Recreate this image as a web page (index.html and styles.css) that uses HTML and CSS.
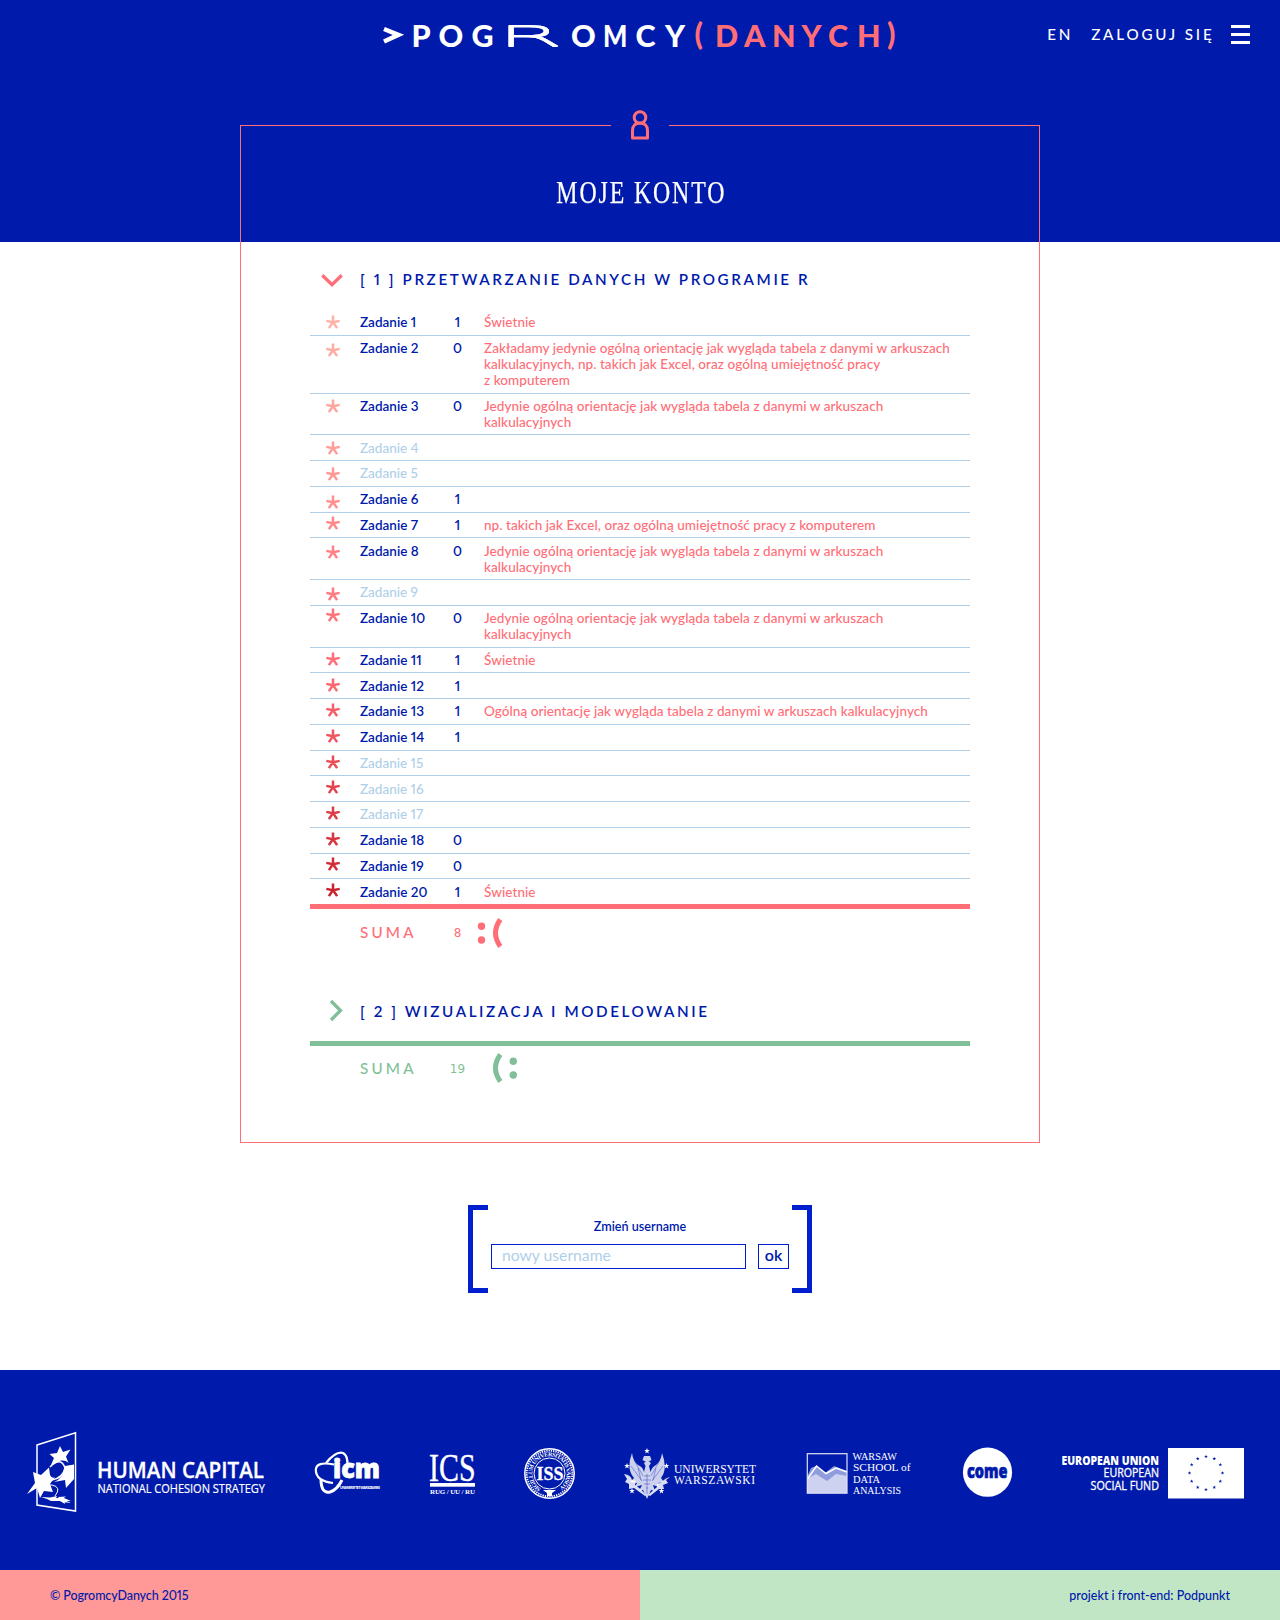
FILE: index.html
```html
<!DOCTYPE html>
<html lang="pl">
<head>
<meta charset="utf-8">
<title>PogromcyDanych – Moje konto</title>
<link rel="stylesheet" href="styles.css">
</head>
<body>
<svg class="defs" width="0" height="0" aria-hidden="true">
  <symbol id="star" viewBox="0 0 14 14"><path d="M7 7.6V.4M7 7.3L.3 5.9M7 7.3L13.7 5.9M7 7L2.9 13.1M7 7L11.1 13.1" fill="none" stroke="currentColor" stroke-width="2.5"/></symbol>
  <symbol id="fivestar" viewBox="-10 -10 20 20"><path d="M0-10L2.4-3.1H9.5L3.8 1.2L5.9 8.1L0 4L-5.9 8.1L-3.8 1.2L-9.5-3.1H-2.4Z" fill="currentColor"/></symbol>
</svg>

<header class="top">
  <div class="top-bar">
    <svg class="brand" width="520" height="32" viewBox="0 0 520 32">
      <path d="M4 9L18.500 14.900L4 21.500" class="prompt"/>
      <text class="brand-text" y="27" x="31.5 58.5 91.5">POG</text>
      <g transform="translate(117 26) scale(3.3 1)"><text class="brand-wide">R</text></g>
      <text class="brand-text" y="27" x="191">O</text>
      <g transform="translate(223 27) scale(.84 1)"><text class="brand-text">M</text></g>
      <text class="brand-text" y="27" x="255.5 285">CY</text>
      <text class="brand-text accent" y="24.5 27 27 27 27 27 27 24.5" x="314.5 335 364 392 421.5 448 477 507">(DANYCH)</text>
    </svg>
    <nav class="nav">
      <a class="lang">EN</a>
      <a class="login">ZALOGUJ SIĘ</a>
      <span class="burger"><i></i><i></i><i></i></span>
    </nav>
  </div>
</header>

<main class="frame">
  <div class="frame-top">
    <span class="rule"></span>
    <svg width="20" height="32" viewBox="0 0 20 32" class="person"><circle cx="10" cy="8.5" r="5.8"/><path d="M2.5 28.9V21.5C2.5 16.6 5.6 14 10 14S17.500 16.600 17.500 21.500V28.900Z"/></svg>
    <span class="rule"></span>
  </div>
  <h1><span>MOJE KONTO</span></h1>

  <section class="course">
    <h2><svg class="chev" width="24" height="24" viewBox="0 0 24 24"><path d="M2.300 8.300L12 17.800L21.700 8.300"/></svg>[ 1 ] PRZETWARZANIE DANYCH W PROGRAMIE R</h2>
    <div class="tasks">
      <div class="row"><svg class="star" style="--y:5px;color:#ffb3a8"><use href="#star"/></svg><b>Zadanie 1</b><i>1</i><p>Świetnie</p></div>
      <div class="row"><svg class="star" style="--y:7.300px;color:#ffada3"><use href="#star"/></svg><b>Zadanie 2</b><i>0</i><p>Zakładamy jedynie ogólną orientację jak wygląda tabela z danymi w arkuszach<br>kalkulacyjnych, np. takich jak Excel, oraz ogólną umiejętność pracy<br>z komputerem</p></div>
      <div class="row"><svg class="star" style="--y:5.800px;color:#ffa59e"><use href="#star"/></svg><b>Zadanie 3</b><i>0</i><p>Jedynie ogólną orientację jak wygląda tabela z danymi w arkuszach<br>kalkulacyjnych</p></div>
      <div class="row off"><svg class="star" style="--y:6.100px;color:#ff9e98"><use href="#star"/></svg><b>Zadanie 4</b></div>
      <div class="row off"><svg class="star" style="--y:5.900px;color:#ff9793"><use href="#star"/></svg><b>Zadanie 5</b></div>
      <div class="row"><svg class="star" style="--y:8.200px;color:#ff908e"><use href="#star"/></svg><b>Zadanie 6</b><i>1</i></div>
      <div class="row"><svg class="star" style="--y:3.900px;color:#ff8989"><use href="#star"/></svg><b>Zadanie 7</b><i>1</i><p>np. takich jak Excel, oraz ogólną umiejętność pracy z komputerem</p></div>
      <div class="row"><svg class="star" style="--y:7.200px;color:#ff8285"><use href="#star"/></svg><b>Zadanie 8</b><i>0</i><p>Jedynie ogólną orientację jak wygląda tabela z danymi w arkuszach<br>kalkulacyjnych</p></div>
      <div class="row off"><svg class="star" style="--y:7.300px;color:#ff7b80"><use href="#star"/></svg><b>Zadanie 9</b></div>
      <div class="row"><svg class="star" style="--y:2.200px;color:#ff747b"><use href="#star"/></svg><b>Zadanie 10</b><i>0</i><p>Jedynie ogólną orientację jak wygląda tabela z danymi w arkuszach<br>kalkulacyjnych</p></div>
      <div class="row"><svg class="star" style="--y:4.900px;color:#ff6e77"><use href="#star"/></svg><b>Zadanie 11</b><i>1</i><p>Świetnie</p></div>
      <div class="row"><svg class="star" style="--y:4.900px;color:#fb666f"><use href="#star"/></svg><b>Zadanie 12</b><i>1</i></div>
      <div class="row"><svg class="star" style="--y:4.500px;color:#f55e67"><use href="#star"/></svg><b>Zadanie 13</b><i>1</i><p>Ogólną orientację jak wygląda tabela z danymi w arkuszach kalkulacyjnych</p></div>
      <div class="row"><svg class="star" style="--y:4.700px;color:#ef555f"><use href="#star"/></svg><b>Zadanie 14</b><i>1</i></div>
      <div class="row off"><svg class="star" style="--y:4.300px;color:#e94d56"><use href="#star"/></svg><b>Zadanie 15</b></div>
      <div class="row off"><svg class="star" style="--y:4.200px;color:#e3454e"><use href="#star"/></svg><b>Zadanie 16</b></div>
      <div class="row off"><svg class="star" style="--y:4.200px;color:#dc3c46"><use href="#star"/></svg><b>Zadanie 17</b></div>
      <div class="row"><svg class="star" style="--y:4px;color:#d6343e"><use href="#star"/></svg><b>Zadanie 18</b><i>0</i></div>
      <div class="row"><svg class="star" style="--y:3.800px;color:#d02c36"><use href="#star"/></svg><b>Zadanie 19</b><i>0</i></div>
      <div class="row"><svg class="star" style="--y:3.600px;color:#c9242e"><use href="#star"/></svg><b>Zadanie 20</b><i>1</i><p>Świetnie</p></div>
    </div>
    <div class="sum red"><span class="sum-label">SUMA</span><span class="sum-num">8</span><svg class="face" width="40" height="32" viewBox="0 0 40 32"><circle cx="4.500" cy="9.300" r="3.700"/><circle cx="4.500" cy="23" r="3.700"/><path d="M23.300 2.500Q13.700 16 23.300 29.500"/></svg></div>
  </section>

  <section class="course green">
    <h2><svg class="chev" width="24" height="24" viewBox="0 0 24 24"><path d="M11 2L20.500 11.500L11 21"/></svg>[ 2 ] WIZUALIZACJA I MODELOWANIE</h2>
    <div class="sum"><span class="sum-label">SUMA</span><span class="sum-num">19</span><svg class="face" width="40" height="32" viewBox="0 0 40 32"><circle cx="36.300" cy="9.300" r="3.700"/><circle cx="36.300" cy="23" r="3.700"/><path d="M23.300 2.500Q13.700 16 23.300 29.500"/></svg></div>
  </section>
</main>

<form class="rename">
  <span class="bracket left"></span>
  <div class="fields">
    <label for="username">Zmień username</label>
    <div class="line">
      <input id="username" type="text" placeholder="nowy username">
      <button type="button">ok</button>
    </div>
  </div>
  <span class="bracket right"></span>
</form>

<footer>
  <div class="partners">
    <svg width="240" height="80" viewBox="0 0 240 80" fill="#fff">
      <path d="M10 13L48.500.700V79L10 73Z" fill="none" stroke="#fff" stroke-width="1.500"/>
      <path d="M33 14L36 20L43.500 17.500L39 24.500L41.500 31C38 28 34 28 31.500 30L24 33L27 26L22.500 22L30 21Z"/>
      <path d="M6 40L14 43L22 35.500L23 43Q25 47 28 45L23 52L26 60L17 59L13 66L10 56L0 62L8 51Z"/>
      <path d="M38 34L47 32.500V47L39 56L38 48L27 50Q37 46 38 34Z"/>
      <path d="M23 35Q34 24 38 36Q36 46 25 48" fill="none" stroke="#fff" stroke-width="1.500"/>
      <path d="M14 63Q16 52 25 53Q35 55 28 64" fill="none" stroke="#fff"/>
      <path d="M14 65L23 65.500L30 64L29 66L37 66L44 69L37 69L38 72L33 69L24 69L20 67ZM31 65L39 64.500L35 67L44 71L35 70Z"/>
      <text class="humanist" x="70" y="46" font-size="22" font-weight="600" stroke="#fff" stroke-width=".3" textLength="167" lengthAdjust="spacingAndGlyphs">HUMAN CAPITAL</text>
      <text class="humanist" x="70.500" y="60.800" font-size="12.300" stroke="#fff" stroke-width=".2" textLength="167.500" lengthAdjust="spacingAndGlyphs">NATIONAL COHESION STRATEGY</text>
    </svg>
    <svg width="68" height="80" viewBox="0 0 68 80">
      <g fill="none" stroke="#fff"><path d="M12 31Q22 19 29 21Q35 24 33 38" stroke-width="2.200"/><path d="M20 32.500Q2 29 1.800 38Q2 49 19 51" stroke-width="2.200"/><path d="M7 47Q7 62 16 60Q23 58 28 48" stroke-width="3"/></g>
      <text class="humanist" x="19" y="46" font-size="26" font-weight="800" fill="#fff" stroke="#fff" stroke-width=".8" textLength="47" lengthAdjust="spacingAndGlyphs">icm</text>
      <text class="humanist" x="26" y="57" font-size="3.700" font-weight="700" fill="#fff" textLength="40">UNIWERSYTET WARSZAWSKI</text>
    </svg>
    <svg width="47" height="80" viewBox="0 0 47 80" fill="#fff">
      <text class="serif" x="0" y="48.500" font-size="41" stroke="#fff" stroke-width=".4" textLength="46.500" lengthAdjust="spacingAndGlyphs">ICS</text>
      <rect x="1" y="51" width="45" height="3.700"/>
      <text class="serif" x="1" y="62" font-size="7" font-weight="700" textLength="45">RUG / UU / RU</text>
    </svg>
    <svg width="53" height="80" viewBox="0 0 53 80">
      <circle cx="26.500" cy="41.500" r="24.700" fill="none" stroke="#fff" stroke-width="1.500"/>
      <circle cx="26.500" cy="41.500" r="22.800" fill="none" stroke="#fff" stroke-width="1.800" stroke-dasharray="1.300 1"/>
      <circle cx="26.500" cy="41.500" r="15.500" fill="none" stroke="#fff" stroke-width="1"/>
      <path id="seal" d="M18 56.400A17.200 17.200 0 1 1 35 56.400" fill="none"/>
      <text class="serif" font-size="6" font-weight="700" fill="#fff"><textPath href="#seal" textLength="88">SIGILLUM UNIVERSITATIS VARSOV</textPath></text>
      <path d="M20 58H33L29 61V64H24V61Z" fill="#fff"/>
      <text class="serif" x="13.500" y="47.800" font-size="18.500" font-weight="700" fill="#fff" stroke="#fff" stroke-width=".3" textLength="27" lengthAdjust="spacingAndGlyphs">ISS</text>
    </svg>
    <svg width="135" height="80" viewBox="0 0 135 80" fill="#fff">
      <g opacity=".8">
        <path d="M9 21Q3 37 11 46L7 50L14 51L12 55L19 53L16 59L20 58L24 67L28 58L32 59L30 53L36 55L35 51L41 50L38 46Q45 37 39 21Q38 29 33 33Q29 35 27.500 40L26 34L28 31L24 28L21 31L22.500 34L21 40Q20 35 15 33Q10 29 9 21Z"/>
        <path d="M21 24H27L28.500 28Q24 31 19.500 28Z"/>
      </g>
      <g fill="none" stroke="#001aab" stroke-width=".6" opacity=".6"><path d="M11 28L20 44M8 34L19 49M37 28L28 44M40 34L29 49M15 36L18 48M33 36L30 48M21 44H27M20 48H28M21 52H27M23 56H25M24 42V62"/></g>
      <path d="M1 42Q8 43 9 48L13 49L12 53Q17 56 23 63L22 64L11 56L6 57L6 52L2 50L4 47ZM47 45Q42 46 39 50L34 52L34 55L25 63L27 64L36 57L41 57L40 53L45 51L43 48Z" opacity=".85"/>
      <g color="#fff"><use href="#fivestar" x="21" y="16" width="6" height="6"/><use href="#fivestar" x="1" y="31" width="6" height="6"/><use href="#fivestar" x="40.500" y="31" width="6" height="6"/><use href="#fivestar" x="6" y="56" width="6" height="6"/><use href="#fivestar" x="35.500" y="56" width="6" height="6"/></g>
      <text class="serif" x="51" y="40.600" font-size="11.500" textLength="82">UNIWERSYTET</text>
      <text class="serif" x="51" y="52" font-size="11.500" textLength="81">WARSZAWSKI</text>
    </svg>
    <svg width="109" height="80" viewBox="0 0 109 80">
      <path d="M2 45L6 36L11 34L20 41L29 34L42 39V61H2Z" fill="#8f9ddd"/>
      <path d="M2 47L11 42L22 49L31 42L42 44V61H2Z" fill="#cdd2f0"/>
      <path d="M2.500 47L11.500 34L21 41.500L31 36L42 40" fill="none" stroke="#fff" stroke-width="1.500"/>
      <rect x="2.300" y="21.700" width="39.700" height="39.500" fill="none" stroke="#dfe3f6" stroke-width="1.200"/>
      <g class="serif" font-size="10.800" fill="#fff">
        <text x="47.500" y="28.200" textLength="44.500" lengthAdjust="spacingAndGlyphs">WARSAW</text>
        <text x="48" y="39.300" textLength="57.500" lengthAdjust="spacingAndGlyphs">SCHOOL of</text>
        <text x="48" y="50.500" textLength="27" lengthAdjust="spacingAndGlyphs">DATA</text>
        <text x="48" y="61.500" textLength="48" lengthAdjust="spacingAndGlyphs">ANALYSIS</text>
      </g>
    </svg>
    <svg width="53" height="80" viewBox="0 0 53 80">
      <circle cx="26.500" cy="40.200" r="24.600" fill="#fff"/>
      <text class="humanist" x="6" y="45.500" font-size="19.500" font-weight="800" fill="#001aab" stroke="#001aab" stroke-width=".7" textLength="40.500" lengthAdjust="spacingAndGlyphs">come</text>
    </svg>
    <svg width="183" height="80" viewBox="0 0 183 80" fill="#fff">
      <text class="humanist" x="0.500" y="33" font-size="12" font-weight="800" textLength="97.500" lengthAdjust="spacingAndGlyphs">EUROPEAN UNION</text>
      <text class="humanist" x="42.500" y="45.400" font-size="12" stroke="#fff" stroke-width=".3" textLength="55.500" lengthAdjust="spacingAndGlyphs">EUROPEAN</text>
      <text class="humanist" x="29.500" y="57.600" font-size="12" stroke="#fff" stroke-width=".3" textLength="68.500" lengthAdjust="spacingAndGlyphs">SOCIAL FUND</text>
      <rect x="107" y="16" width="76" height="50.500"/>
      <g color="#001aab"><use href="#fivestar" x="143" y="22.500" width="4" height="4"/><use href="#fivestar" x="151.250" y="24.700" width="4" height="4"/><use href="#fivestar" x="157.300" y="30.750" width="4" height="4"/><use href="#fivestar" x="159.500" y="39" width="4" height="4"/><use href="#fivestar" x="157.300" y="47.250" width="4" height="4"/><use href="#fivestar" x="151.250" y="53.300" width="4" height="4"/><use href="#fivestar" x="143" y="55.500" width="4" height="4"/><use href="#fivestar" x="134.750" y="53.300" width="4" height="4"/><use href="#fivestar" x="128.700" y="47.250" width="4" height="4"/><use href="#fivestar" x="126.500" y="39" width="4" height="4"/><use href="#fivestar" x="128.700" y="30.750" width="4" height="4"/><use href="#fivestar" x="134.750" y="24.700" width="4" height="4"/></g>
    </svg>
  </div>
  <div class="credits">
    <div class="credit-left"><span>© PogromcyDanych 2015</span></div>
    <div class="credit-right"><span>projekt i front-end: Podpunkt</span></div>
  </div>
</footer>
</body>
</html>
```
FILE: styles.css
```css
:root {
  --navy: #001aab;
  --coral: #ff6e77;
  --sky: #afd0e8;
  --mint: #80bf98;
}
* { box-sizing: border-box; }
body {
  margin: 0;
  background: #fff;
  color: var(--navy);
  font-family: Lato, "Open Sans", sans-serif;
  font-size: 13.5px;
  line-height: 16px;
  font-variant-numeric: proportional-nums;
}
.defs { position: absolute; }
.serif { font-family: "Liberation Serif", serif; }
.humanist { font-family: "Open Sans", sans-serif; }

.top { height: 242px; background: var(--navy); }
.top-bar {
  display: grid;
  grid-template-columns: 1fr 520px 1fr;
  padding: 20px 30px 0 30px;
}
.brand { grid-column: 2; overflow: visible; }
.brand-text { font-size: 30.5px; font-weight: 900; fill: #fff; }
.brand-wide {
  font-family: "DejaVu Sans", sans-serif;
  font-size: 29px;
  font-weight: 200;
  fill: #fff;
  filter: drop-shadow(0 1px 0 #fff) drop-shadow(0 .8px 0 #fff);
}
.brand-text.accent { fill: var(--coral); }
.prompt { fill: none; stroke: #fff; stroke-width: 4.5; }
.nav {
  display: flex;
  justify-content: flex-end;
  align-items: flex-start;
  color: #fff;
  font-size: 15.2px;
  font-weight: 500;
}
.nav a { line-height: 29px; letter-spacing: 2.8px; white-space: nowrap; }
.lang { margin-right: 18px; }
.login { margin-right: 16px; }
.burger { display: flex; flex-direction: column; gap: 5px; margin-top: 5px; }
.burger i { width: 19.500px; height: 3px; background: #fff; }

.frame {
  width: 800px;
  height: 1018px;
  margin: -117px auto 0;
  border: 1px solid var(--coral);
  border-top: 0;
}
.frame-top { display: flex; justify-content: space-between; height: 30px; }
.rule { width: 370px; height: 1px; background: var(--coral); }
.person { margin-top: -16px; fill: none; stroke: var(--coral); stroke-width: 3; stroke-linejoin: round; }
h1 {
  margin: 16px 0 0;
  height: 77px;
  padding-left: 2px;
  text-align: center;
  font: 400 31px/44px "Liberation Serif", serif;
  letter-spacing: 2.400px;
  color: #fff;
}
h1 span { display: inline-block; transform: scaleX(.77); -webkit-text-stroke: .25px #fff; }

.course { width: 660px; margin: 0 auto; color: var(--coral); }
.course.green { color: var(--mint); }
h2 {
  display: flex;
  align-items: center;
  margin: 0;
  height: 62px;
  padding: 0 0 0 10px;
  font-size: 15.200px;
  font-weight: 600;
  line-height: 24px;
  letter-spacing: 2.600px;
  color: var(--navy);
  white-space: pre;
}
.chev { margin-right: 16px; fill: none; stroke: var(--coral); stroke-width: 3.300; flex: none; }
.green h2 { height: 61px; }
.green .chev { stroke: var(--mint); }
.row {
  display: grid;
  grid-template-columns: 50px 75px 45px 1fr;
  padding: 4.390px 0;
  border-bottom: 1px solid var(--sky);
  color: var(--navy);
}
.row:last-child { border-bottom: 5px solid var(--coral); }
.row b { font-weight: 600; font-size: 13.500px; }
.row i { font-style: normal; font-weight: 600; text-align: center; }
.row p { margin: 0 0 0 4px; color: var(--coral); font-weight: 500; white-space: nowrap; letter-spacing: .067px; }
.row.off b { color: var(--sky); font-weight: 500; }
.star { width: 14px; height: 14px; margin: calc(var(--y) - 4.390px) 0 -8px 16px; }

.sum { display: grid; grid-template-columns: 50px 75px 45px 1fr; height: 71px; padding-top: 8px; }
.sum-label { grid-column: 2; font-size: 15.200px; font-weight: 500; letter-spacing: 3.200px; line-height: 30px; }
.sum-num { font-family: "DejaVu Sans", sans-serif; font-size: 12px; text-align: center; line-height: 32px; }
.face { margin-left: -3px; }
.face circle { fill: currentColor; }
.face path { fill: none; stroke: currentColor; stroke-width: 5; }
.green .sum { border-top: 5px solid var(--mint); padding-top: 6px; }
.green .sum-label, .green .sum-num { padding-top: 1px; }

.rename {
  display: flex;
  justify-content: space-between;
  width: 344px;
  height: 88px;
  margin: 62px auto 77px;
}
.bracket { width: 20px; border: 5px solid #0020cf; }
.bracket.left { border-right: 0; }
.bracket.right { border-left: 0; }
.fields { width: 298px; flex: none; display: flex; flex-direction: column; margin: 0 -10px; }
.fields label { text-align: center; padding: 14px 0 9px; font-size: 12.600px; font-weight: 600; }
.line { display: flex; justify-content: space-between; }
input {
  width: 255px; height: 25px; padding: 0 10px 4px;
  border: 1px solid #0020cf; background: #fff;
  font: 400 15.700px Lato, sans-serif; color: var(--navy);
}
input::placeholder { color: var(--sky); opacity: 1; }
button {
  width: 31px; height: 25px; padding: 0 0 4px;
  border: 1px solid #0020cf; background: #fff;
  font: 600 16px Lato, sans-serif; color: var(--navy);
}

.partners {
  display: flex;
  justify-content: space-between;
  height: 200px;
  padding: 62px 36px 0 27px;
  background: var(--navy);
}
.partners svg { flex: none; overflow: visible; }
.credits { display: grid; grid-template-columns: 1fr 1fr; height: 50px; line-height: 52px; font-size: 12.500px; font-weight: 500; }
.credit-left { background: #ff9998; padding-left: 50px; letter-spacing: -.1px; }
.credit-right { background: #c0e6c6; padding-right: 50px; text-align: right; }
```
